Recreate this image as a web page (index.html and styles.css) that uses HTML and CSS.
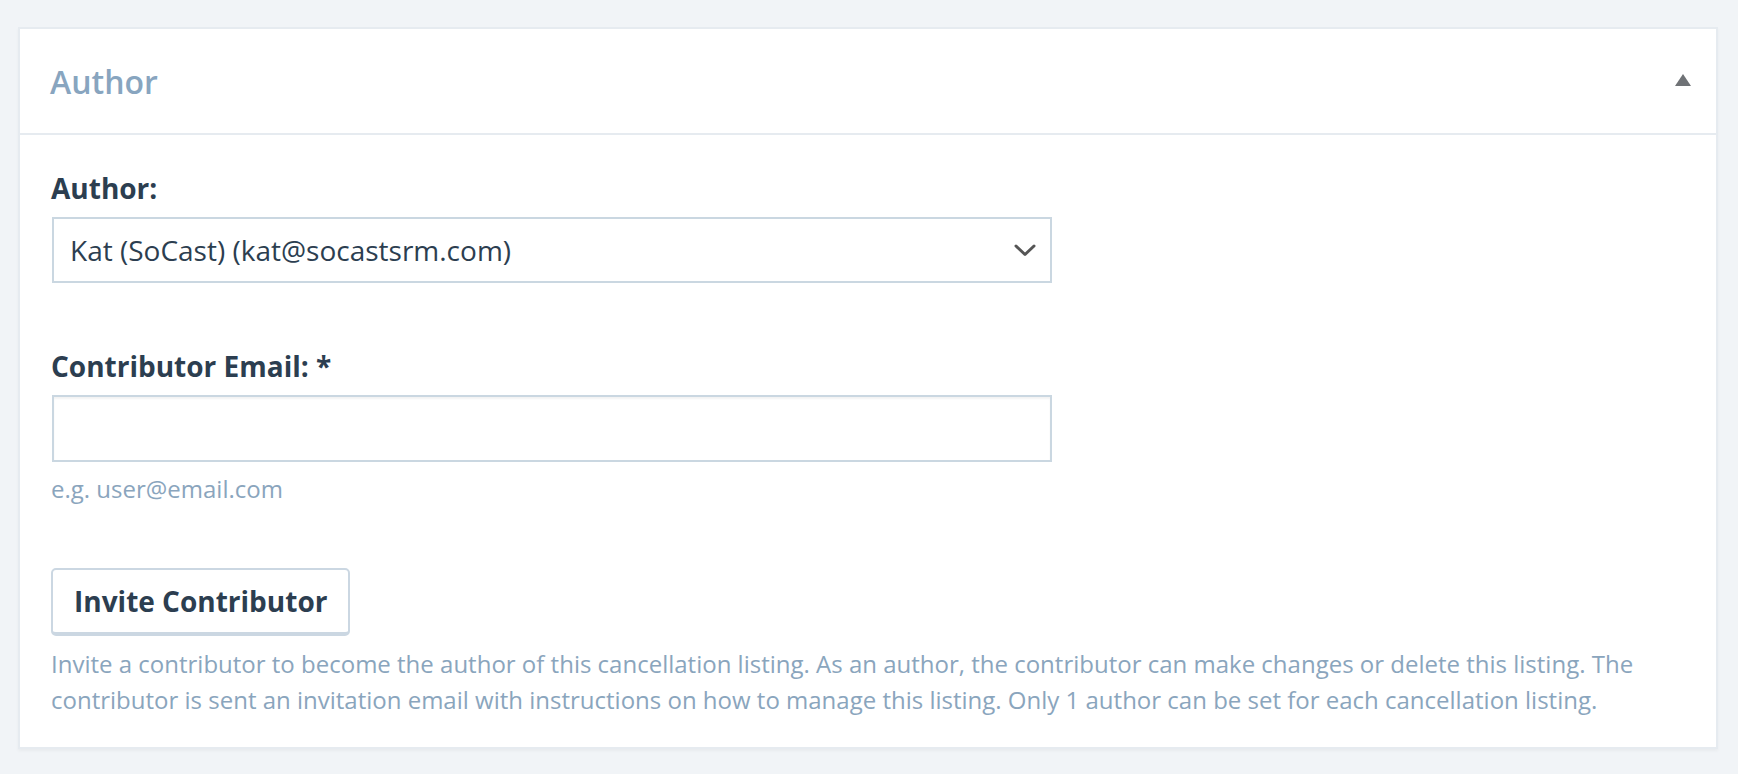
FILE: index.html
```html
<!DOCTYPE html>
<html lang="en">
<head>
    <meta charset="UTF-8">
    <meta name="viewport" content="width=device-width, initial-scale=1.0">
    <title>Author</title>
    <link rel="stylesheet" href="styles.css">
</head>
<body>
<div class="panel">
    <div class="panel-header">
        <h2>Author</h2>
        <span class="toggle" aria-label="Collapse"></span>
    </div>
    <div class="panel-body">
        <div class="field">
            <label for="author">Author:</label>
            <div class="select-wrap">
                <select id="author" name="author">
                    <option>Kat (SoCast) (kat@socastsrm.com)</option>
                </select>
                <svg class="chevron" width="22" height="13" viewBox="0 0 22 13">
                    <path d="M2 2 L11 10.5 L20 2" fill="none" stroke="#555" stroke-width="3" stroke-linecap="round" stroke-linejoin="round"/>
                </svg>
            </div>
        </div>

        <div class="field field-email">
            <label for="email">Contributor Email: *</label>
            <input type="email" id="email" name="email">
            <p class="hint">e.g. user@email.com</p>
        </div>

        <button type="button" class="btn">Invite Contributor</button>
        <p class="note">Invite a contributor to become the author of this cancellation listing. As an author, the contributor can make changes or delete this listing. The contributor is sent an invitation email with instructions on how to manage this listing. Only 1 author can be set for each cancellation listing.</p>
    </div>
</div>
</body>
</html>
```

FILE: styles.css
```css
body {
    font-family: "Open Sans", "Liberation Sans", sans-serif;
    margin: 0;
    padding: 27px 20px 18px 18px;
    background-color: #f1f4f7;
    color: #2c3e50;
}
.panel {
    background: white;
    border: 2px solid #e6ebf0;
    box-shadow: 0 2px 3px rgba(0, 0, 0, 0.04);
}
.panel-header {
    height: 104px;
    display: flex;
    align-items: center;
    justify-content: space-between;
    padding: 0 25px 0 30px;
    border-bottom: 2px solid #e6ebf0;
}
.panel-header h2 {
    margin: 0;
    font-size: 32px;
    font-weight: 600;
    color: #88a5bf;
}
.toggle {
    width: 0;
    height: 0;
    border-left: 8px solid transparent;
    border-right: 8px solid transparent;
    border-bottom: 12px solid #6f7276;
    margin-bottom: 2px;
}
.panel-body {
    padding: 32px 31px 29px;
}
label {
    display: block;
    font-size: 28px;
    font-weight: 700;
    line-height: 42px;
    margin-bottom: 8px;
}
.field-email {
    margin-top: 62px;
}
.select-wrap {
    position: relative;
    width: 1000px;
}
select, input {
    display: block;
    box-sizing: border-box;
    width: 1000px;
    margin: 0 0 0 1px;
    border: 2px solid #cad7e1;
    border-radius: 0;
    background: white;
    font-family: inherit;
    font-size: 28px;
    color: #2c3e50;
}
select {
    height: 66px;
    padding: 0 60px 0 16px;
    appearance: none;
    -webkit-appearance: none;
}
.chevron {
    position: absolute;
    right: 15px;
    top: 27px;
    pointer-events: none;
}
input {
    height: 67px;
    padding: 0 16px;
    box-shadow: inset 0 2px 2px rgba(0, 0, 0, 0.05);
}
.hint, .note {
    font-size: 24px;
    line-height: 36px;
    color: #8aa5bd;
    margin: 0;
}
.hint {
    margin-top: 9px;
}
.btn {
    display: block;
    margin-top: 61px;
    height: 68px;
    padding: 0 21px;
    background: white;
    border: 2px solid #cbd7e2;
    border-bottom-width: 4px;
    border-radius: 5px;
    font-family: inherit;
    font-size: 28px;
    font-weight: 700;
    color: #2c3e50;
    cursor: pointer;
}
.note {
    margin-top: 10px;
}
```
